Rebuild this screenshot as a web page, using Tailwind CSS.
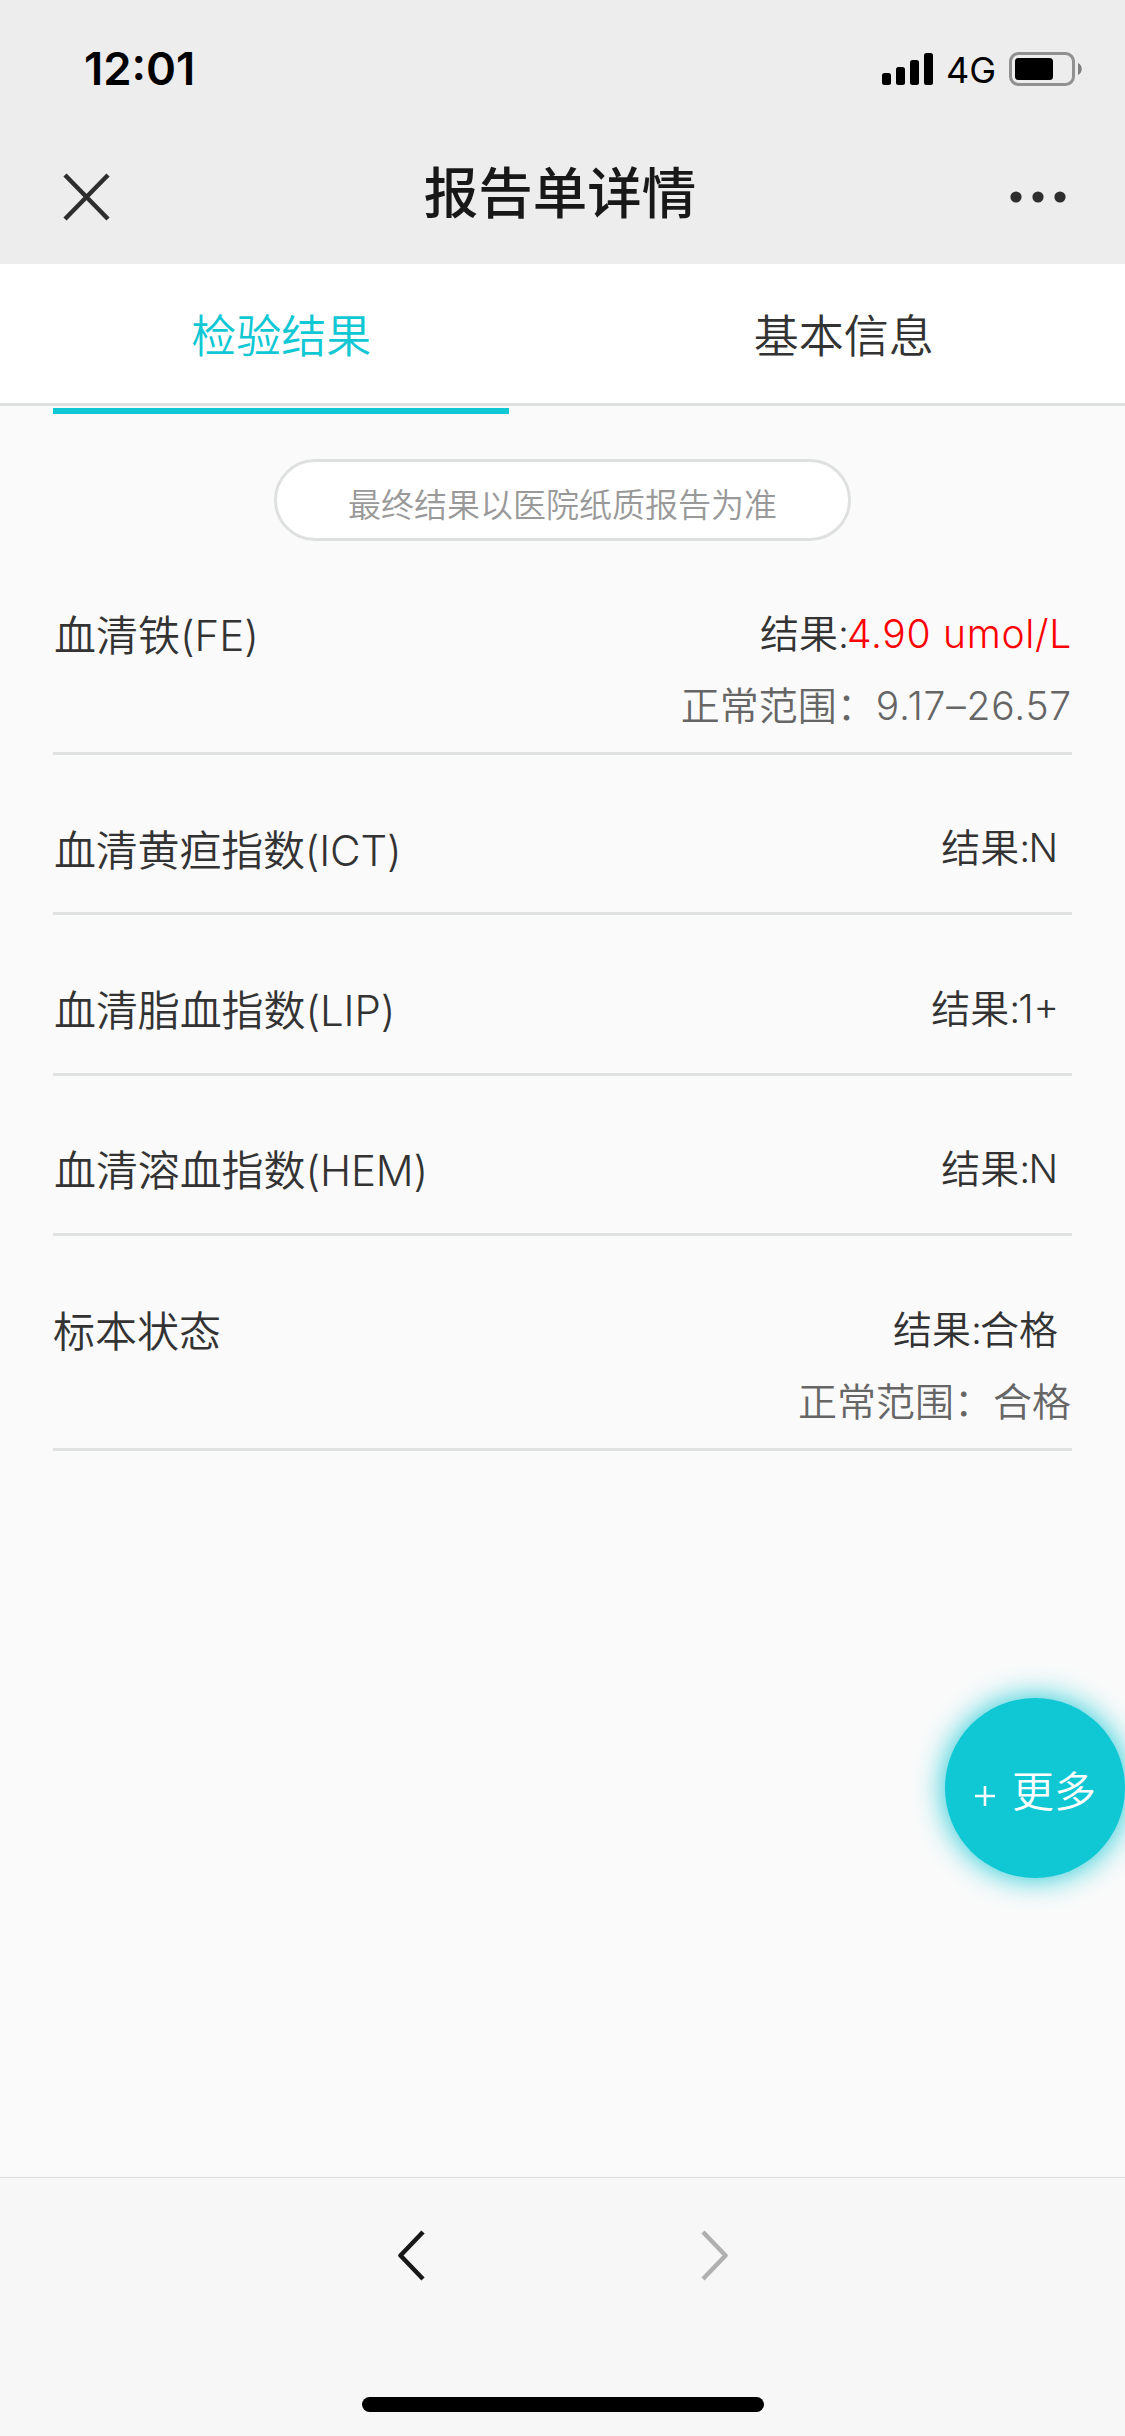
<!DOCTYPE html>
<html lang="zh-CN">

<head>
  <meta charset="UTF-8">
  <meta name="viewport" content="width=device-width, initial-scale=1.0">
  <title>报告单详情</title>
  <script src="https://cdn.jsdelivr.net/npm/@tailwindcss/browser@4"></script>
</head>

<body class="bg-[#fafafa] font-['Inter','Noto_Sans_CJK_SC',sans-serif] text-[#333]">
  <div class="relative flex flex-col w-[1125px] h-[2436px] overflow-hidden">
    <!-- Header -->
    <header class="h-[264px] shrink-0 bg-[#ededed]">
      <!-- Status bar -->
      <div class="flex items-center justify-between h-[138px] pl-[84px] pr-[43px]">
        <span class="text-[45.5px] leading-none font-semibold text-black">12:01</span>
        <div class="flex items-center">
          <svg class="w-[51px] h-[32px]" viewBox="0 0 51 32">
            <rect x="0" y="20" width="9" height="12" rx="2.5" />
            <rect x="14" y="14" width="9" height="18" rx="2.5" />
            <rect x="28" y="7" width="9" height="25" rx="2.5" />
            <rect x="42" y="0" width="9" height="32" rx="2.5" />
          </svg>
          <span class="ml-[13px] w-[63px] pt-[2px] text-[36px] leading-none text-black">4G</span>
          <svg class="w-[73px] h-[34px]" viewBox="0 0 73 34">
            <rect x="1.5" y="1.5" width="63" height="31" rx="8" fill="none" stroke="#919191" stroke-width="3" />
            <rect x="6" y="6" width="38" height="22" rx="3.5" />
            <path d="M69 11c5 2 5 10 0 12z" fill="#808080" />
          </svg>
        </div>
      </div>
      <!-- Title bar -->
      <div class="flex items-center justify-between h-[118px] px-[63px]">
        <svg class="w-[47px] h-[48px]" viewBox="0 0 47 48" fill="none" stroke="#2e2e2e" stroke-width="4.5">
          <path d="M2 2l43 44M45 2L2 46" />
        </svg>
        <h1 class="pb-[8px] text-[54.5px] leading-none font-medium text-[#181818]">报告单详情</h1>
        <svg class="w-[56px] h-[12px] -mr-[4px]" viewBox="0 0 56 12" fill="#2e2e2e">
          <circle cx="6" cy="6" r="5.6" />
          <circle cx="28" cy="6" r="5.6" />
          <circle cx="50" cy="6" r="5.6" />
        </svg>
      </div>
    </header>

    <!-- Tabs -->
    <nav class="grid grid-cols-2 h-[142px] shrink-0 bg-white border-b-3 border-[#dfe1e1] text-[45px] leading-[145px] font-[350] text-center">
      <a class="text-[#10c7d4]">检验结果</a>
      <a>基本信息</a>
    </nav>
    <div class="mt-[2px] ml-[53px] w-[456px] h-[6px] shrink-0 bg-[#10c7d4]"></div>

    <main class="flex flex-col flex-1 px-[53px] pt-[45px] font-[350]">
      <!-- Notice -->
      <p class="self-center w-[577px] h-[82px] pt-[5px] bg-white border-3 border-[#dfe1e1] rounded-full text-[33px] leading-[76px] text-center text-[#999]">最终结果以医院纸质报告为准</p>

      <!-- Results -->
      <ul class="text-[39px] leading-[72px]">
        <li class="flex justify-between h-[214px] pt-[56px] border-b-3 border-[#dfe2e1]">
          <span class="pt-[3px] pl-px text-[42px]">血清铁(FE)</span>
          <div class="pt-px text-right">
            <p>结果<span class="tracking-[-2px]">:</span><span class="tracking-[0.7px] text-[#ff0000]">4.90 umol/L</span></p>
            <p class="text-[#666]">正常范围：<span class="tracking-[0.8px]">9.17–26.57</span></p>
          </div>
        </li>
        <li class="flex justify-between h-[160px] pt-[57px] border-b-3 border-[#dfe2e1]">
          <span class="pt-[3px] pl-px text-[42px] tracking-[-0.2px]">血清黄疸指数(ICT)</span>
          <p class="pr-[14px]">结果<span class="tracking-[-2px]">:</span>N</p>
        </li>
        <li class="flex justify-between h-[161px] pt-[57px] border-b-3 border-[#dfe2e1]">
          <span class="pt-[3px] pl-px text-[42px] tracking-[-0.1px]">血清脂血指数(LIP)</span>
          <p class="pt-px pr-[13px]">结果<span class="tracking-[-2px]">:</span>1+</p>
        </li>
        <li class="flex justify-between h-[160px] pt-[57px] border-b-3 border-[#dfe2e1]">
          <span class="pt-[2px] pl-px text-[42px] tracking-[-0.1px]">血清溶血指数(HEM)</span>
          <p class="pr-[14px]">结果<span class="tracking-[-2px]">:</span>N</p>
        </li>
        <li class="flex justify-between h-[215px] pt-[57px] border-b-3 border-[#dfe2e1]">
          <span class="pt-[3px] text-[42px]">标本状态</span>
          <div class="pt-px text-right">
            <p class="pr-[14px]">结果<span class="tracking-[-2px]">:</span>合格</p>
            <p class="pr-px text-[#666]">正常范围：合格</p>
          </div>
        </li>
      </ul>
    </main>

    <!-- More button -->
    <button class="absolute right-0 top-[1698px] flex items-center pl-[30px] size-[180px] rounded-full bg-[#10c7d4] shadow-[0_0_30px_#10c7d4] font-[350] text-white text-[42px] leading-none whitespace-nowrap">
      <svg class="mt-[16px] mr-[17px] size-[20px]" viewBox="0 0 20 20" stroke="currentColor" stroke-width="2.6">
        <path d="M10 0v20M0 10h20" />
      </svg>
      <span class="pt-[8px]">更多</span>
    </button>

    <!-- Bottom navigation -->
    <footer class="flex flex-col items-center justify-between h-[259px] shrink-0 pt-[52px] pb-[24px] bg-[#f7f7f7] border-t border-[#dcdcdc]">
      <div class="flex justify-between w-[330px]">
        <svg class="w-[27px] h-[51px]" viewBox="0 0 27 51" fill="none" stroke="#181818" stroke-width="4.5" stroke-linejoin="round">
          <path d="M25 2L2.500 25.500L25 49" />
        </svg>
        <svg class="w-[27px] h-[51px]" viewBox="0 0 27 51" fill="none" stroke="#b0b0b0" stroke-width="4.5" stroke-linejoin="round">
          <path d="M2 2l22.500 23.500L2 49" />
        </svg>
      </div>
      <div class="w-[402px] h-[15px] rounded-full bg-black"></div>
    </footer>
  </div>
</body>

</html>
